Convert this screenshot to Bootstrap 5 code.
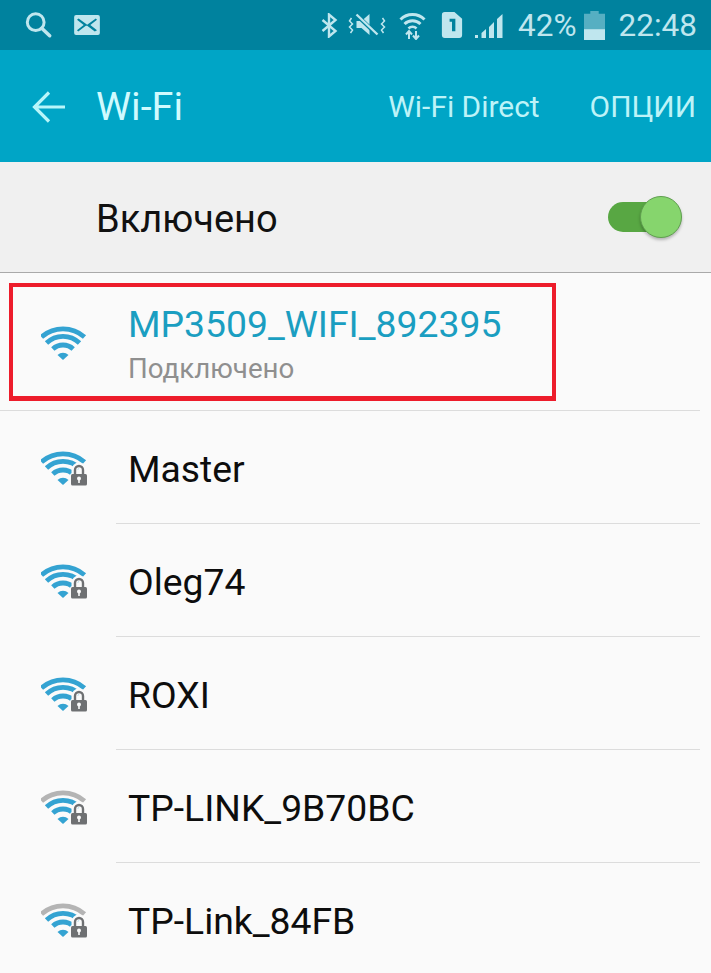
<!DOCTYPE html>
<html lang="ru">
<head>
  <meta charset="UTF-8" />
  <meta name="viewport" content="width=device-width, initial-scale=1" />
  <title>Wi-Fi</title>
  <link href="https://cdn.jsdelivr.net/npm/bootstrap@5.3.0/dist/css/bootstrap.min.css" rel="stylesheet" />
  <style>
    html, body { height: 973px; overflow: hidden; }
    body { background: #fafafa; font-family: Roboto, "Noto Sans", sans-serif; color: #111; }
    .phone { width: 711px; height: 973px; position: relative; overflow: hidden; }

    .status-bar { height: 50px; background: #00829e; color: #bfe6ee; font-size: 31.5px; line-height: 1; padding: 0 14px 0 24px; }
    .status-bar svg { display: block; fill: currentColor; }
    .status-text { margin-top: 1px; }
    .st-mail { margin-left: 21px; }
    .st-mute { margin-left: 10px; }
    .st-wifi { margin-left: 12px; }
    .st-sim { margin-left: 15px; }
    .st-signal { margin-left: 12px; }
    .st-pct { margin-left: 15px; }
    .st-batt { margin-left: 7px; }
    .st-time { margin-left: 14px; }

    .app-bar { height: 112px; background: #00a5c6; color: #bdf3f8; padding: 2px 15px 0 32px; }
    .app-title { font-size: 39.5px; margin-left: 31px; color: #d0fafe; }
    .app-action { font-size: 29.9px; }
    .app-action-last { margin-left: 50px; }
    .back-icon { display: block; }

    .toggle-row { height: 111px; background: #f0f0f0; border-bottom: 1px solid #a9a9a9; padding: 0 29px 0 97px; font-size: 38px; }
    .toggle-label { margin-top: 4px; margin-left: -1px; }
    .wifi-switch { width: 74px; height: 42px; position: relative; }
    .wifi-track { position: absolute; left: 0; top: 6px; width: 60px; height: 30px; background: #58a743; border-radius: 15px; }
    .wifi-knob { position: absolute; right: 0; top: 0; width: 42px; height: 42px; background: #86d56d; border: 1px solid #5f9f4f; border-radius: 50%; box-shadow: 0 2px 3px rgba(0,0,0,.25); }

    .net-list { background: transparent; border-radius: 0; }
    .net-row { background: transparent; border: 0; padding: 0; height: 113px; }
    .net-row.first { height: 138px; }
    .net-icon { width: 116px; flex: none; padding: 1px 0 0 41px; }
    .net-icon svg { display: block; }
    .net-body { border-bottom: 1px solid #dcdcdc; margin-right: 11px; font-size: 37.3px; line-height: 1.2; color: #0d0d0d; padding-top: 5px; }
    .first .net-body { margin-left: -116px; padding: 3px 0 0 128px; }
    .first .net-icon { position: relative; z-index: 1; }
    .net-row:not(.first) .net-body { padding-left: 12px; }
    .net-name-on { font-size: 37.3px; color: #1a9ec1; line-height: 44px; }
    .net-sub { font-size: 27.7px; color: #8f8f8f; line-height: 32px; margin-top: 7px; }

    .arc-on { stroke: #34a3d2; }
    .arc-off { stroke: #b4b4b4; }
    .dot-on { fill: #34a3d2; }
    .lock-body { fill: #6e7072; stroke: #fafafa; stroke-width: 2; paint-order: stroke; }
    .lock-shackle { fill: none; stroke: #fafafa; stroke-width: 6; }
    .lock-shackle-in { fill: none; stroke: #6e7072; stroke-width: 2.4; }

    .red-frame { position: absolute; left: 9px; top: 283px; width: 547px; height: 118px; border: 4px solid #ed1c2b; border-bottom-width: 5px; pointer-events: none; }
  </style>
</head>
<body>
  <svg width="0" height="0" class="position-absolute">
    <defs>
      <g id="arcs2">
        <g fill="none" stroke-width="4.8">
          <path class="arc-on" d="M11.800 24A15 15 0 0 1 32.200 24" />
          <path class="arc-on" d="M5.500 18A23.700 23.700 0 0 1 38.500 18" />
        </g>
        <path class="dot-on" d="M22 35L16.500 30A8 8 0 0 1 27.500 30Z" />
      </g>
      <g id="lock">
        <path class="lock-shackle" d="M33.500 25v-5a4.500 4.500 0 0 1 9 0v5" />
        <rect class="lock-body" x="30" y="24" width="16" height="11.500" rx="1.500" />
        <path class="lock-shackle-in" d="M34 25v-5a4 4 0 0 1 8 0v5" />
        <circle cx="38" cy="28.500" r="2" fill="#fafafa" />
        <rect x="37.200" y="29" width="1.600" height="4" fill="#fafafa" />
      </g>
      <symbol id="wifi-open" viewBox="0 0 46 36">
        <use href="#arcs2" />
        <path class="arc-on" fill="none" stroke-width="4.8" d="M.5 12A32.500 32.500 0 0 1 43.500 12" />
      </symbol>
      <symbol id="wifi-lock" viewBox="0 0 46 36">
        <use href="#arcs2" />
        <path class="arc-on" fill="none" stroke-width="4.8" d="M.5 12A32.500 32.500 0 0 1 43.500 12" />
        <use href="#lock" />
      </symbol>
      <symbol id="wifi-weak" viewBox="0 0 46 36">
        <use href="#arcs2" />
        <path class="arc-off" fill="none" stroke-width="4.8" d="M.5 12A32.500 32.500 0 0 1 43.500 12" />
        <use href="#lock" />
      </symbol>
    </defs>
  </svg>

  <div class="phone">
    <div class="status-bar d-flex align-items-center">
      <svg width="29" height="28" viewBox="0 0 30 30" style="fill:none;stroke:currentColor"><circle cx="12" cy="12" r="9" stroke-width="3.200"/><path d="M18.500 18.500L27 26.500" stroke-width="3.800" stroke-linecap="round"/></svg>
      <svg class="st-mail" width="26" height="20" viewBox="0 0 27 21"><path fill-rule="evenodd" d="M2 0h23a2 2 0 0 1 2 2v17a2 2 0 0 1-2 2H2a2 2 0 0 1-2-2V2a2 2 0 0 1 2-2zM3 5l7 5.500-7 5.500 1.300 1.300 8-6h1.400l8 6L24 16l-7-5.500L24 5l-1.300-1.300-9 6.500-9-6.500z"/></svg>

      <svg class="ms-auto" width="17" height="25" viewBox="0 0 17 25" style="fill:none;stroke:currentColor"><path d="M1.500 7L14.500 18L8 23.500V1.500L14.500 7L1.500 18" stroke-width="2.400"/></svg>
      <svg class="st-mute" width="39" height="27" viewBox="0 0 38 27"><path d="M8 9h5l8-7v21l-8-7H8z"/><path d="M7 2l24 23" stroke="#00829e" stroke-width="4"/><path d="M8 2.500l21 20" stroke="currentColor" stroke-width="2.400"/><path d="M3 6l-2 3 3 3-3 3 3 3-2 3M34 6l2 3-3 3 3 3-3 3 2 3" fill="none" stroke="currentColor" stroke-width="1.500"/></svg>
      <svg class="st-wifi" width="27" height="29" viewBox="0 0 27 29" style="fill:none;stroke:currentColor"><path d="M1.500 8.500a17 17 0 0 1 24 0M5.500 13a11.500 11.500 0 0 1 16 0" stroke-width="3"/><path d="M9.500 17.500a5.500 5.500 0 0 1 8 0" stroke-width="2.600"/><path d="M10 28V21M7 23.500l3-3.500 3 3.500M17 20v7M14 24.500l3 3.500 3-3.500" stroke-width="2"/></svg>
      <svg class="st-sim" width="22" height="26" viewBox="0 0 21 27"><path fill-rule="evenodd" d="M3 0h10l8 7v17a3 3 0 0 1-3 3H3a3 3 0 0 1-3-3V3a3 3 0 0 1 3-3zM8 7v3h2.500v10h3.500V7z"/></svg>
      <svg class="st-signal" width="28" height="26" viewBox="0 0 28 26"><path d="M0 26h3v-3H0zM6.500 26H11V17L6.500 21zM14 26h5V10l-5 5zM22 26h5.500V2L22 7z"/></svg>
      <span class="status-text st-pct">42%</span>
      <svg class="st-batt" width="21" height="29" viewBox="0 0 20 32" preserveAspectRatio="none"><path opacity=".45" d="M6 0h8v3h6v17H0V3h6z"/><path d="M0 20h20v12H0z"/></svg>
      <span class="status-text st-time">22:48</span>
    </div>

    <div class="app-bar d-flex align-items-center">
      <svg class="back-icon" width="33" height="32" viewBox="0 0 33 32" fill="none" stroke="#b8f6fa" stroke-width="3.200"><path d="M33 16H3M17 1.500L2.500 16 17 30.500"/></svg>
      <span class="app-title">Wi-Fi</span>
      <span class="app-action ms-auto">Wi-Fi Direct</span>
      <span class="app-action app-action-last">ОПЦИИ</span>
    </div>

    <div class="toggle-row d-flex align-items-center justify-content-between">
      <span class="toggle-label">Включено</span>
      <div class="wifi-switch"><div class="wifi-track"></div><div class="wifi-knob"></div></div>
    </div>

    <ul class="list-group list-group-flush net-list">
      <li class="list-group-item net-row first d-flex">
        <div class="net-icon align-self-center"><svg width="46" height="36"><use href="#wifi-open"/></svg></div>
        <div class="net-body flex-grow-1 d-flex flex-column justify-content-center">
          <div class="net-name-on">MP3509_WIFI_892395</div>
          <div class="net-sub">Подключено</div>
        </div>
      </li>
      <li class="list-group-item net-row d-flex">
        <div class="net-icon align-self-center"><svg width="46" height="36"><use href="#wifi-lock"/></svg></div>
        <div class="net-body flex-grow-1 d-flex align-items-center">Master</div>
      </li>
      <li class="list-group-item net-row d-flex">
        <div class="net-icon align-self-center"><svg width="46" height="36"><use href="#wifi-lock"/></svg></div>
        <div class="net-body flex-grow-1 d-flex align-items-center">Oleg74</div>
      </li>
      <li class="list-group-item net-row d-flex">
        <div class="net-icon align-self-center"><svg width="46" height="36"><use href="#wifi-lock"/></svg></div>
        <div class="net-body flex-grow-1 d-flex align-items-center">ROXI</div>
      </li>
      <li class="list-group-item net-row d-flex">
        <div class="net-icon align-self-center"><svg width="46" height="36"><use href="#wifi-weak"/></svg></div>
        <div class="net-body flex-grow-1 d-flex align-items-center">TP-LINK_9B70BC</div>
      </li>
      <li class="list-group-item net-row d-flex">
        <div class="net-icon align-self-center"><svg width="46" height="36"><use href="#wifi-weak"/></svg></div>
        <div class="net-body flex-grow-1 d-flex align-items-center">TP-Link_84FB</div>
      </li>
    </ul>

    <div class="red-frame"></div>
  </div>

  <script src="https://cdn.jsdelivr.net/npm/bootstrap@5.3.0/dist/js/bootstrap.bundle.min.js"></script>
</body>
</html>
